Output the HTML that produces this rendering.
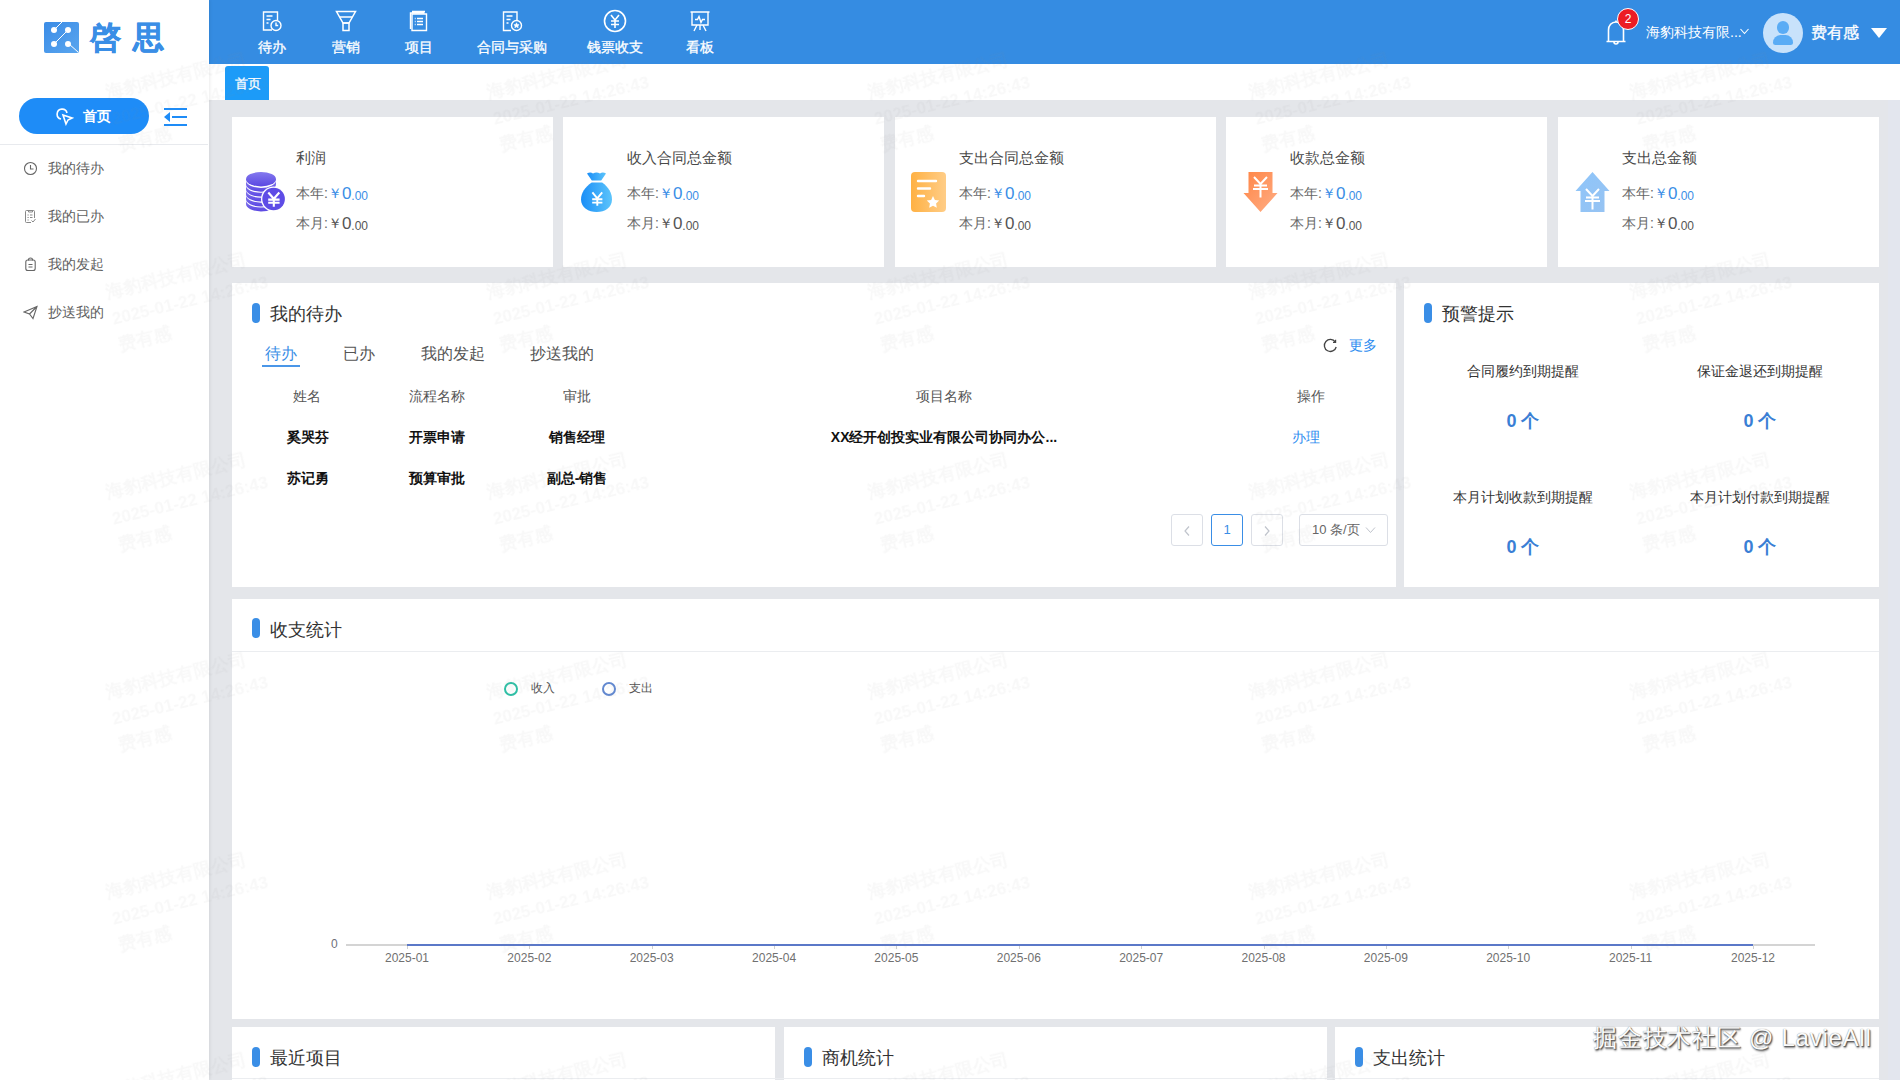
<!DOCTYPE html>
<html><head><meta charset="utf-8">
<style>
*{margin:0;padding:0;box-sizing:border-box}
html,body{width:1900px;height:1080px;overflow:hidden}
body{position:relative;background:#e4e6ea;font-family:"Liberation Sans",sans-serif;color:#333}
.abs{position:absolute}
#side{left:0;top:0;width:209px;height:1080px;background:#fff;box-shadow:1px 0 3px rgba(0,0,0,0.08);z-index:2}
#hdr{left:209px;top:0;width:1691px;height:64px;background:#358ce2}
#tabbar{left:209px;top:64px;width:1691px;height:36px;background:#fff}
.card{position:absolute;background:#fff}
.t{position:absolute;white-space:nowrap;line-height:1}
.nav{position:absolute;top:0;height:64px;color:#fff;text-align:center}
.nav .lbl{position:absolute;top:40px;left:0;width:100%;font-size:14px;line-height:14px;-webkit-text-stroke:0.3px #fff}
.nav svg{position:absolute;top:10px;left:50%;margin-left:-11px}
.menu{position:absolute;left:23px;font-size:14px;color:#606060;line-height:14px}
.menu svg{position:absolute;left:0;top:0}
.menu span{position:absolute;left:25px;top:0px;white-space:nowrap}
.stitle{font-size:15px;color:#4a4a4a}
.sl{font-size:14px;color:#666}
.big{font-size:17px;position:relative;top:1px}
.sm{font-size:12px;position:relative;top:1.5px}
.bar{position:absolute;width:8px;height:20px;border-radius:4px;background:#3a8ee6;margin-top:-1px}
.ctitle{position:absolute;font-size:18px;color:#333;line-height:18px;white-space:nowrap;margin-top:1px}
.th{font-size:14px;color:#555}
.td{font-size:14px;color:#111;font-weight:bold}
.blue{color:#2d8cf0}
.wtitle{font-size:14px;color:#333}
.wnum{font-size:18px;color:#3a7fd5;font-weight:bold}
.pg{position:absolute;top:514px;height:32px;border:1px solid #dcdfe6;border-radius:3px;background:#fff}
.xl{position:absolute;top:952px;font-size:12px;color:#707070;line-height:12px;white-space:nowrap}
.wm{position:absolute;color:rgba(0,0,0,0.035);font-size:18px;line-height:28px;transform:rotate(-20deg);white-space:nowrap;text-align:center;font-weight:bold}
.wmk{position:absolute;z-index:5;transform-origin:0 0;transform:rotate(-13.5deg);color:rgba(140,140,140,0.06);filter:blur(0.5px);font-weight:bold;line-height:27px;white-space:nowrap;pointer-events:none}
.wmk b{display:block;font-size:18px}.wmk i{display:block;font-style:normal;font-size:17px}
</style></head>
<body>
<!-- sidebar -->
<div id="side" class="abs">
  <svg class="abs" style="left:44px;top:22px" width="35" height="32" viewBox="0 0 35 32">
    <defs><linearGradient id="lg" x1="0" y1="0" x2="1" y2="1"><stop offset="0" stop-color="#3b8ce6"/><stop offset="1" stop-color="#5aa6ef"/></linearGradient></defs>
    <rect x="0" y="0" width="35" height="31" rx="2" fill="url(#lg)"/>
    <line x1="10" y1="8" x2="18" y2="0" stroke="#fff" stroke-width="1"/>
    <line x1="10" y1="22" x2="24" y2="8" stroke="#fff" stroke-width="1"/>
    <line x1="25" y1="22" x2="34" y2="30" stroke="#fff" stroke-width="1"/>
    <circle cx="10" cy="8" r="3" fill="#fff"/><circle cx="24" cy="8" r="3" fill="#fff"/>
    <circle cx="10" cy="22" r="3" fill="#fff"/><circle cx="24" cy="22" r="3" fill="#fff"/>
  </svg>
  <div class="t" style="left:90px;top:20px;font-size:31px;line-height:36px;font-weight:bold;color:#3a8ee6;letter-spacing:12px;-webkit-text-stroke:0.6px #3a8ee6">啓思</div>
  <div class="abs" style="left:19px;top:98px;width:130px;height:36px;border-radius:18px;background:#1e8cf7"></div>
  <svg class="abs" style="left:56px;top:108px" width="18" height="18" viewBox="0 0 18 18" fill="none" stroke="#fff" stroke-width="1.6">
    <path d="M5 11 A5 5 0 1 1 11 5"/><path d="M7 7 L16 10 L12 12 L10 16 Z"/>
  </svg>
  <div class="t" style="left:83px;top:108px;font-size:14px;line-height:16px;color:#fff;font-weight:bold">首页</div>
  <svg class="abs" style="left:164px;top:108px" width="23" height="19" viewBox="0 0 23 19">
    <rect x="0" y="0" width="23" height="2" fill="#1e8cf7"/>
    <rect x="8" y="8" width="15" height="2" fill="#1e8cf7"/>
    <rect x="0" y="16" width="23" height="2" fill="#1e8cf7"/>
    <path d="M0 9 L6 4 L6 14 Z" fill="#1e8cf7"/>
  </svg>
  <div class="abs" style="left:0;top:144px;width:208px;height:1px;background:#e8eaee"></div>
  <div class="menu" style="top:161px"><svg width="15" height="15" viewBox="0 0 15 15" fill="none" stroke="#666" stroke-width="1.1"><circle cx="7.5" cy="7.5" r="6"/><path d="M7.5 4v4h3"/></svg><span>我的待办</span></div>
  <div class="menu" style="top:209px"><svg width="15" height="15" viewBox="0 0 15 15" fill="none" stroke="#888" stroke-width="1"><path d="M8 13.5H3.5a1 1 0 0 1-1-1v-10a1 1 0 0 1 1-1h7a1 1 0 0 1 1 1V9"/><path d="M5.5 1.5v1.5h4V1.5"/><path d="M4.5 6h1.2M7 6h2.5M4.5 8.5h1.2M7 8.5h2.5M4.5 11h1.2"/><path d="M8.5 11.5l1.5 1.5 2.5-3"/></svg><span>我的已办</span></div>
  <div class="menu" style="top:257px"><svg width="15" height="15" viewBox="0 0 15 15" fill="none" stroke="#666" stroke-width="1.1"><rect x="2.8" y="3" width="9.4" height="10.5" rx="2"/><path d="M5.5 3.5V2.5a2 1.5 0 0 1 4 0v1"/><path d="M5.5 7.5h4M5.5 10h4"/></svg><span>我的发起</span></div>
  <div class="menu" style="top:305px"><svg width="15" height="15" viewBox="0 0 15 15" fill="none" stroke="#666" stroke-width="1.1"><path d="M1 7 L14 1.5 L10 13.5 L6.5 9 Z M6.5 9 L14 1.5"/></svg><span>抄送我的</span></div>
</div>

<!-- header -->
<div id="hdr" class="abs"></div>
<div class="abs" style="left:1888px;top:100px;width:12px;height:980px;background:#e3e6ee"></div>
<div id="navs">
<div class="nav" style="left:252px;width:40px"><svg width="22" height="22" viewBox="0 0 22 22" fill="none" stroke="#fff" stroke-width="1.4"><path d="M11 20H2.5V2h14v8"/><path d="M5.5 6h6M5.5 9.5h4M5.5 13h2"/><circle cx="15" cy="15.5" r="5"/><path d="M15 12.5v3h2.2"/></svg><div class="lbl">待办</div></div>
<div class="nav" style="left:326px;width:40px"><svg width="22" height="22" viewBox="0 0 22 22" fill="none" stroke="#fff" stroke-width="1.5"><path d="M1.5 1.5h19L14 13H8Z"/><path d="M8 13h6v7.5H8Z"/><path d="M5 7h12"/></svg><div class="lbl">营销</div></div>
<div class="nav" style="left:399px;width:40px"><svg width="22" height="22" viewBox="0 0 22 22" fill="none" stroke="#fff" stroke-width="1.4"><path d="M4 20.5h14.5V4H4Z"/><path d="M2.5 19V3h14M4 1.5h13"/><path d="M9 8.5h6M9 11.5h6M9 14.5h6M6.8 8.5h.8M6.8 11.5h.8M6.8 14.5h.8"/></svg><div class="lbl">项目</div></div>
<div class="nav" style="left:467px;width:90px"><svg width="22" height="22" viewBox="0 0 22 22" fill="none" stroke="#fff" stroke-width="1.4"><path d="M10 20.5H2.5V2h13.5v8"/><path d="M5.5 6h6M5.5 9.5h4M5.5 13h2"/><circle cx="15.5" cy="15.5" r="5"/><path d="M15.5 12.8l.8 1.7 1.8.2-1.3 1.2.4 1.8-1.7-.9-1.7.9.4-1.8-1.3-1.2 1.8-.2Z" fill="#fff" stroke-width=".6"/></svg><div class="lbl">合同与采购</div></div>
<div class="nav" style="left:577px;width:76px"><svg width="24" height="24" viewBox="0 0 24 24" fill="none" stroke="#fff" stroke-width="1.6" style="margin-left:-12px;top:9px"><circle cx="12" cy="12" r="10.5"/><path d="M8 6l4 5 4-5M8 12h8M8 15.5h8M12 11v8"/></svg><div class="lbl">钱票收支</div></div>
<div class="nav" style="left:680px;width:40px"><svg width="22" height="22" viewBox="0 0 22 22" fill="none" stroke="#fff" stroke-width="1.4"><path d="M1.5 2h19M3 2v13h16V2"/><path d="M6 9.5h2.5l1.5-3 2 6 1.5-3H16"/><path d="M11 15v5M8 15l-3 6M14 15l3 6"/></svg><div class="lbl">看板</div></div>
</div>
<!-- header right -->
<svg class="abs" style="left:1604px;top:18px" width="24" height="28" viewBox="0 0 24 28" fill="none" stroke="#fff" stroke-width="1.6"><path d="M2.5 23.5h19M4.5 23.5V12c0-4.5 3-8 7.5-8s7.5 3.5 7.5 8v11.5"/><path d="M12 2.5v1.5M10 24a2 2 0 0 0 4 0"/></svg>
<div class="abs" style="left:1617px;top:8px;width:22px;height:22px;border-radius:11px;background:#ec1c24;border:1px solid #fff"></div>
<div class="t" style="left:1617px;top:12px;width:22px;text-align:center;font-size:12px;line-height:14px;color:#fff">2</div>
<div class="t" style="left:1646px;top:25px;font-size:14px;line-height:14px;color:#fff">海豹科技有限...</div>
<svg class="abs" style="left:1740px;top:28px" width="9" height="7" viewBox="0 0 9 7" fill="none" stroke="#fff" stroke-width="1.1"><path d="M.5 1l4 4.5 4-4.5"/></svg>
<div class="abs" style="left:1763px;top:13px;width:40px;height:40px;border-radius:20px;background:#c8e2fb;overflow:hidden">
 <div class="abs" style="left:13.8px;top:8px;width:12px;height:12.5px;border-radius:6px;background:#5aacf5"></div>
 <div class="abs" style="left:10px;top:22px;width:19.5px;height:10px;border-radius:9px 9px 3px 3px;background:#5aacf5"></div>
</div>
<div class="t" style="left:1811px;top:25px;font-size:16px;line-height:16px;color:#fff;-webkit-text-stroke:0.3px #fff">费有感</div>
<svg class="abs" style="left:1871px;top:28px" width="16" height="11" viewBox="0 0 16 11"><path d="M0 0h16L8 10Z" fill="#fff"/></svg>

<div id="tabbar" class="abs"></div>
<div class="abs" style="left:225px;top:66px;width:44px;height:34px;background:#1c9bf8;border-radius:3px 3px 0 0"></div>
<div class="t" style="left:235px;top:77px;font-size:13px;line-height:14px;color:#fff;-webkit-text-stroke:0.3px #fff">首页</div>

<div class="card" style="left:232px;top:117px;width:321px;height:150px"></div>
<svg class="abs" style="left:246px;top:172px" width="41" height="41" viewBox="0 0 41 41" overflow="visible"><defs><linearGradient id="gc" x1="0" y1="0" x2="0" y2="1"><stop offset="0" stop-color="#8479ee"/><stop offset="1" stop-color="#5b48e2"/></linearGradient></defs>
<g fill="url(#gc)"><ellipse cx="15" cy="7.2" rx="15" ry="7.2"/><path d="M0 8.50A15 7.4 0 0 0 30 8.50V12.30A15 7.4 0 0 1 0 12.30Z"/><path d="M0 13.42A15 7.4 0 0 0 30 13.42V17.22A15 7.4 0 0 1 0 17.22Z"/><path d="M0 18.34A15 7.4 0 0 0 30 18.34V22.14A15 7.4 0 0 1 0 22.14Z"/><path d="M0 23.26A15 7.4 0 0 0 30 23.26V27.06A15 7.4 0 0 1 0 27.06Z"/><path d="M0 28.18A15 7.4 0 0 0 30 28.18V31.98A15 7.4 0 0 1 0 31.98Z"/></g>
<circle cx="27.6" cy="27" r="12.6" fill="#fff"/><circle cx="27.6" cy="27" r="11.3" fill="#5e4ce6"/>
<path d="M22.3 20.5l5.5 6.3 5.5-6.3M22.2 27.6h11.4M22.2 30.8h11.4M27.8 26.5v8.2" stroke="#fff" stroke-width="2.1" fill="none"/></svg>
<div class="t stitle" style="left:296px;top:150px">利润</div>
<div class="t sl" style="left:296px;top:184px">本年:<span style="color:#3a8ee6">￥<span class="big">0</span><span class="sm">.00</span></span></div>
<div class="t sl" style="left:296px;top:214px">本月:<span style="color:#555">￥<span class="big">0</span><span class="sm">.00</span></span></div>
<div class="card" style="left:563px;top:117px;width:321px;height:150px"></div>
<svg class="abs" style="left:581px;top:172px" width="32" height="40" viewBox="0 0 32 40"><defs><linearGradient id="gb" x1="0" y1="0" x2="1" y2="0"><stop offset="0" stop-color="#1a8ef7"/><stop offset="1" stop-color="#5cc4fb"/></linearGradient></defs>
<path d="M6 1.6 Q9 -0.4 12 1.4 Q15.5 -0.4 19 1.4 Q22 -0.4 25 1.6 L20.2 8.6 H10.8Z" fill="url(#gb)"/>
<path d="M10.7 10.6 H21.2 C27.5 15.5 31 21 31 27.5 C31 35.5 24 40 15.7 40 C7.5 40 0 35.5 0 27.5 C0 21 4 15.5 10.7 10.6Z" fill="url(#gb)"/>
<path d="M11.4 20.4l4.9 6 4.9-6M11.2 27.3h10.2M11.2 30.6h10.2M16.3 26.3v7.4" stroke="#fff" stroke-width="1.9" fill="none"/></svg>
<div class="t stitle" style="left:627px;top:150px">收入合同总金额</div>
<div class="t sl" style="left:627px;top:184px">本年:<span style="color:#3a8ee6">￥<span class="big">0</span><span class="sm">.00</span></span></div>
<div class="t sl" style="left:627px;top:214px">本月:<span style="color:#555">￥<span class="big">0</span><span class="sm">.00</span></span></div>
<div class="card" style="left:895px;top:117px;width:321px;height:150px"></div>
<svg class="abs" style="left:911px;top:172px" width="35" height="40" viewBox="0 0 35 40"><defs><linearGradient id="gd" x1="0" y1="0" x2="1" y2="0"><stop offset="0" stop-color="#ffb143"/><stop offset="1" stop-color="#ffcd87"/></linearGradient></defs>
<rect x="0" y="0" width="35" height="40" rx="4" fill="url(#gd)"/>
<path d="M7 9h18M7 16.5h12M7 24h6" stroke="#fff" stroke-width="2.4" stroke-linecap="round"/>
<path d="M22 24l1.9 3.9 4.3.6-3.1 3 .7 4.3-3.8-2-3.8 2 .7-4.3-3.1-3 4.3-.6Z" fill="#fff"/></svg>
<div class="t stitle" style="left:959px;top:150px">支出合同总金额</div>
<div class="t sl" style="left:959px;top:184px">本年:<span style="color:#3a8ee6">￥<span class="big">0</span><span class="sm">.00</span></span></div>
<div class="t sl" style="left:959px;top:214px">本月:<span style="color:#555">￥<span class="big">0</span><span class="sm">.00</span></span></div>
<div class="card" style="left:1226px;top:117px;width:321px;height:150px"></div>
<svg class="abs" style="left:1243px;top:172px" width="35" height="40" viewBox="0 0 35 40"><defs><linearGradient id="ga" x1="0" y1="0" x2="1" y2="1"><stop offset="0" stop-color="#ff8545"/><stop offset="1" stop-color="#ffae86"/></linearGradient></defs>
<path d="M5.5 0H29.5V21H34.5L17.5 40L0.5 21H5.5Z" fill="url(#ga)"/>
<path d="M11 5l6.5 7 6.5-7M11 13.5h13M10 17h15M17.5 12.5v13" stroke="#fff" stroke-width="2" fill="none"/></svg>
<div class="t stitle" style="left:1290px;top:150px">收款总金额</div>
<div class="t sl" style="left:1290px;top:184px">本年:<span style="color:#3a8ee6">￥<span class="big">0</span><span class="sm">.00</span></span></div>
<div class="t sl" style="left:1290px;top:214px">本月:<span style="color:#555">￥<span class="big">0</span><span class="sm">.00</span></span></div>
<div class="card" style="left:1558px;top:117px;width:321px;height:150px"></div>
<svg class="abs" style="left:1575px;top:172px" width="35" height="40" viewBox="0 0 35 40"><defs><linearGradient id="gu" x1="0" y1="0" x2="1" y2="1"><stop offset="0" stop-color="#8ec5fa"/><stop offset="1" stop-color="#97c3f2"/></linearGradient></defs>
<path d="M17.5 0L34.5 19H29.5V40H5.5V19H0.5Z" fill="url(#gu)"/>
<path d="M11 17l6.5 7 6.5-7M11 25.5h13M10 29h15M17.5 24.5v13" stroke="#fff" stroke-width="2" fill="none"/></svg>
<div class="t stitle" style="left:1622px;top:150px">支出总金额</div>
<div class="t sl" style="left:1622px;top:184px">本年:<span style="color:#3a8ee6">￥<span class="big">0</span><span class="sm">.00</span></span></div>
<div class="t sl" style="left:1622px;top:214px">本月:<span style="color:#555">￥<span class="big">0</span><span class="sm">.00</span></span></div>
<div class="card" style="left:232px;top:283px;width:1164px;height:304px"></div>
<div class="bar" style="left:252px;top:304px"></div>
<div class="ctitle" style="left:270px;top:304px">我的待办</div>
<div class="t" style="left:265px;top:346px;font-size:16px;color:#3a8ee6">待办</div>
<div class="abs" style="left:262px;top:365px;width:38px;height:2px;background:#4a96e8"></div>
<div class="t" style="left:343px;top:346px;font-size:16px;color:#555">已办</div>
<div class="t" style="left:421px;top:346px;font-size:16px;color:#555">我的发起</div>
<div class="t" style="left:530px;top:346px;font-size:16px;color:#555">抄送我的</div>
<svg class="abs" style="left:1323px;top:338px" width="15" height="15" viewBox="0 0 15 15" fill="none" stroke="#444" stroke-width="1.3"><path d="M12.3 4A6 6 0 1 0 13.2 9"/><path d="M12.6 1.8v2.6H10" stroke-width="1.2"/></svg>
<div class="t blue" style="left:1349px;top:338px;font-size:14px">更多</div>
<div class="t th" style="left:207px;top:389px;width:200px;text-align:center">姓名</div>
<div class="t th" style="left:337px;top:389px;width:200px;text-align:center">流程名称</div>
<div class="t th" style="left:477px;top:389px;width:200px;text-align:center">审批</div>
<div class="t th" style="left:844px;top:389px;width:200px;text-align:center">项目名称</div>
<div class="t th" style="left:1211px;top:389px;width:200px;text-align:center">操作</div>
<div class="t td" style="left:208px;top:430px;width:200px;text-align:center">奚哭芬</div>
<div class="t td" style="left:337px;top:430px;width:200px;text-align:center">开票申请</div>
<div class="t td" style="left:477px;top:430px;width:200px;text-align:center">销售经理</div>
<div class="t td" style="left:744px;top:430px;width:400px;text-align:center">XX经开创投实业有限公司协同办公...</div>
<div class="t blue" style="left:1206px;top:430px;width:200px;text-align:center;font-size:14px">办理</div>
<div class="t td" style="left:208px;top:471px;width:200px;text-align:center">苏记勇</div>
<div class="t td" style="left:337px;top:471px;width:200px;text-align:center">预算审批</div>
<div class="t td" style="left:477px;top:471px;width:200px;text-align:center">副总-销售</div>
<div class="pg" style="left:1171px;width:32px"></div>
<svg class="abs" style="left:1182px;top:525px" width="10" height="12" viewBox="0 0 10 12" fill="none" stroke="#c0c4cc" stroke-width="1.2"><path d="M7 1.5L3 6l4 4.5"/></svg>
<div class="pg" style="left:1211px;width:32px;border-color:#3a8ee6"></div>
<div class="t" style="left:1211px;top:523px;width:32px;text-align:center;font-size:13px;color:#3a8ee6">1</div>
<div class="pg" style="left:1251px;width:32px"></div>
<svg class="abs" style="left:1262px;top:525px" width="10" height="12" viewBox="0 0 10 12" fill="none" stroke="#c0c4cc" stroke-width="1.2"><path d="M3 1.5L7 6l-4 4.5"/></svg>
<div class="pg" style="left:1299px;width:89px"></div>
<div class="t" style="left:1312px;top:523px;font-size:13px;color:#666">10 条/页</div>
<svg class="abs" style="left:1365px;top:526px" width="11" height="8" viewBox="0 0 11 8" fill="none" stroke="#c0c4cc" stroke-width="1"><path d="M1 1.5l4.5 5 4.5-5"/></svg>

<div class="card" style="left:1404px;top:283px;width:475px;height:304px"></div>
<div class="bar" style="left:1424px;top:304px"></div>
<div class="ctitle" style="left:1442px;top:304px">预警提示</div>
<div class="t wtitle" style="left:1423px;top:364px;width:200px;text-align:center">合同履约到期提醒</div>
<div class="t wtitle" style="left:1660px;top:364px;width:200px;text-align:center">保证金退还到期提醒</div>
<div class="t wnum" style="left:1423px;top:412px;width:200px;text-align:center">0 个</div>
<div class="t wnum" style="left:1660px;top:412px;width:200px;text-align:center">0 个</div>
<div class="t wtitle" style="left:1423px;top:490px;width:200px;text-align:center">本月计划收款到期提醒</div>
<div class="t wtitle" style="left:1660px;top:490px;width:200px;text-align:center">本月计划付款到期提醒</div>
<div class="t wnum" style="left:1423px;top:538px;width:200px;text-align:center">0 个</div>
<div class="t wnum" style="left:1660px;top:538px;width:200px;text-align:center">0 个</div>

<div class="card" style="left:232px;top:599px;width:1647px;height:420px"></div>
<div class="bar" style="left:252px;top:619px"></div>
<div class="ctitle" style="left:270px;top:620px">收支统计</div>
<div class="abs" style="left:232px;top:651px;width:1647px;height:1px;background:#ebedf0"></div>
<div class="abs" style="left:504px;top:682px;width:14px;height:14px;border-radius:7px;border:2px solid #2ec0a6"></div>
<div class="t" style="left:531px;top:682px;font-size:12px;color:#555">收入</div>
<div class="abs" style="left:602px;top:682px;width:14px;height:14px;border-radius:7px;border:2px solid #6389d0"></div>
<div class="t" style="left:629px;top:682px;font-size:12px;color:#555">支出</div>
<div class="t" style="left:331px;top:938px;font-size:12px;color:#6e7079">0</div>
<div class="abs" style="left:346px;top:944px;width:1469px;height:2px;background:#d4d4d4"></div>
<div class="abs" style="left:407.0px;top:946px;width:1px;height:3px;background:#d0d0d0"></div><div class="abs" style="left:529.4px;top:946px;width:1px;height:3px;background:#d0d0d0"></div><div class="abs" style="left:651.7px;top:946px;width:1px;height:3px;background:#d0d0d0"></div><div class="abs" style="left:774.1px;top:946px;width:1px;height:3px;background:#d0d0d0"></div><div class="abs" style="left:896.4px;top:946px;width:1px;height:3px;background:#d0d0d0"></div><div class="abs" style="left:1018.8px;top:946px;width:1px;height:3px;background:#d0d0d0"></div><div class="abs" style="left:1141.2px;top:946px;width:1px;height:3px;background:#d0d0d0"></div><div class="abs" style="left:1263.5px;top:946px;width:1px;height:3px;background:#d0d0d0"></div><div class="abs" style="left:1385.9px;top:946px;width:1px;height:3px;background:#d0d0d0"></div><div class="abs" style="left:1508.2px;top:946px;width:1px;height:3px;background:#d0d0d0"></div><div class="abs" style="left:1630.6px;top:946px;width:1px;height:3px;background:#d0d0d0"></div><div class="abs" style="left:1753.0px;top:946px;width:1px;height:3px;background:#d0d0d0"></div>
<div class="abs" style="left:407px;top:944px;width:1346px;height:2px;background:#5b78c8"></div>
<div class="xl" style="left:377.0px;width:60px;text-align:center">2025-01</div><div class="xl" style="left:499.4px;width:60px;text-align:center">2025-02</div><div class="xl" style="left:621.7px;width:60px;text-align:center">2025-03</div><div class="xl" style="left:744.1px;width:60px;text-align:center">2025-04</div><div class="xl" style="left:866.4px;width:60px;text-align:center">2025-05</div><div class="xl" style="left:988.8px;width:60px;text-align:center">2025-06</div><div class="xl" style="left:1111.2px;width:60px;text-align:center">2025-07</div><div class="xl" style="left:1233.5px;width:60px;text-align:center">2025-08</div><div class="xl" style="left:1355.9px;width:60px;text-align:center">2025-09</div><div class="xl" style="left:1478.2px;width:60px;text-align:center">2025-10</div><div class="xl" style="left:1600.6px;width:60px;text-align:center">2025-11</div><div class="xl" style="left:1723.0px;width:60px;text-align:center">2025-12</div>

<div class="card" style="left:232px;top:1027px;width:543px;height:60px"></div>
<div class="bar" style="left:252px;top:1047.5px"></div>
<div class="ctitle" style="left:270px;top:1048px">最近项目</div>
<div class="card" style="left:784px;top:1027px;width:543px;height:60px"></div>
<div class="bar" style="left:804px;top:1047.5px"></div>
<div class="ctitle" style="left:822px;top:1048px">商机统计</div>
<div class="card" style="left:1335px;top:1027px;width:544px;height:60px"></div>
<div class="bar" style="left:1355px;top:1047.5px"></div>
<div class="ctitle" style="left:1373px;top:1048px">支出统计</div>
<div class="abs" style="left:232px;top:1078px;width:1647px;height:1px;background:#ebedf0"></div>
<div class="t" style="left:1593px;top:1024px;font-size:24px;line-height:28px;color:#fbfbfb;letter-spacing:0.75px;text-shadow:0 0 1px #777,1px 1px 1px #555,1px 2px 2px #888">掘金技术社区 @ LavieAll</div>
<div class="wmk" style="left:103px;top:80px"><b>海豹科技有限公司</b><i>2025-01-22 14:26:43</i><b>费有感</b></div>
<div class="wmk" style="left:484px;top:80px"><b>海豹科技有限公司</b><i>2025-01-22 14:26:43</i><b>费有感</b></div>
<div class="wmk" style="left:865px;top:80px"><b>海豹科技有限公司</b><i>2025-01-22 14:26:43</i><b>费有感</b></div>
<div class="wmk" style="left:1246px;top:80px"><b>海豹科技有限公司</b><i>2025-01-22 14:26:43</i><b>费有感</b></div>
<div class="wmk" style="left:1627px;top:80px"><b>海豹科技有限公司</b><i>2025-01-22 14:26:43</i><b>费有感</b></div>
<div class="wmk" style="left:103px;top:280px"><b>海豹科技有限公司</b><i>2025-01-22 14:26:43</i><b>费有感</b></div>
<div class="wmk" style="left:484px;top:280px"><b>海豹科技有限公司</b><i>2025-01-22 14:26:43</i><b>费有感</b></div>
<div class="wmk" style="left:865px;top:280px"><b>海豹科技有限公司</b><i>2025-01-22 14:26:43</i><b>费有感</b></div>
<div class="wmk" style="left:1246px;top:280px"><b>海豹科技有限公司</b><i>2025-01-22 14:26:43</i><b>费有感</b></div>
<div class="wmk" style="left:1627px;top:280px"><b>海豹科技有限公司</b><i>2025-01-22 14:26:43</i><b>费有感</b></div>
<div class="wmk" style="left:103px;top:480px"><b>海豹科技有限公司</b><i>2025-01-22 14:26:43</i><b>费有感</b></div>
<div class="wmk" style="left:484px;top:480px"><b>海豹科技有限公司</b><i>2025-01-22 14:26:43</i><b>费有感</b></div>
<div class="wmk" style="left:865px;top:480px"><b>海豹科技有限公司</b><i>2025-01-22 14:26:43</i><b>费有感</b></div>
<div class="wmk" style="left:1246px;top:480px"><b>海豹科技有限公司</b><i>2025-01-22 14:26:43</i><b>费有感</b></div>
<div class="wmk" style="left:1627px;top:480px"><b>海豹科技有限公司</b><i>2025-01-22 14:26:43</i><b>费有感</b></div>
<div class="wmk" style="left:103px;top:680px"><b>海豹科技有限公司</b><i>2025-01-22 14:26:43</i><b>费有感</b></div>
<div class="wmk" style="left:484px;top:680px"><b>海豹科技有限公司</b><i>2025-01-22 14:26:43</i><b>费有感</b></div>
<div class="wmk" style="left:865px;top:680px"><b>海豹科技有限公司</b><i>2025-01-22 14:26:43</i><b>费有感</b></div>
<div class="wmk" style="left:1246px;top:680px"><b>海豹科技有限公司</b><i>2025-01-22 14:26:43</i><b>费有感</b></div>
<div class="wmk" style="left:1627px;top:680px"><b>海豹科技有限公司</b><i>2025-01-22 14:26:43</i><b>费有感</b></div>
<div class="wmk" style="left:103px;top:880px"><b>海豹科技有限公司</b><i>2025-01-22 14:26:43</i><b>费有感</b></div>
<div class="wmk" style="left:484px;top:880px"><b>海豹科技有限公司</b><i>2025-01-22 14:26:43</i><b>费有感</b></div>
<div class="wmk" style="left:865px;top:880px"><b>海豹科技有限公司</b><i>2025-01-22 14:26:43</i><b>费有感</b></div>
<div class="wmk" style="left:1246px;top:880px"><b>海豹科技有限公司</b><i>2025-01-22 14:26:43</i><b>费有感</b></div>
<div class="wmk" style="left:1627px;top:880px"><b>海豹科技有限公司</b><i>2025-01-22 14:26:43</i><b>费有感</b></div>
<div class="wmk" style="left:103px;top:1080px"><b>海豹科技有限公司</b><i>2025-01-22 14:26:43</i><b>费有感</b></div>
<div class="wmk" style="left:484px;top:1080px"><b>海豹科技有限公司</b><i>2025-01-22 14:26:43</i><b>费有感</b></div>
<div class="wmk" style="left:865px;top:1080px"><b>海豹科技有限公司</b><i>2025-01-22 14:26:43</i><b>费有感</b></div>
<div class="wmk" style="left:1246px;top:1080px"><b>海豹科技有限公司</b><i>2025-01-22 14:26:43</i><b>费有感</b></div>
<div class="wmk" style="left:1627px;top:1080px"><b>海豹科技有限公司</b><i>2025-01-22 14:26:43</i><b>费有感</b></div>
</body></html>
